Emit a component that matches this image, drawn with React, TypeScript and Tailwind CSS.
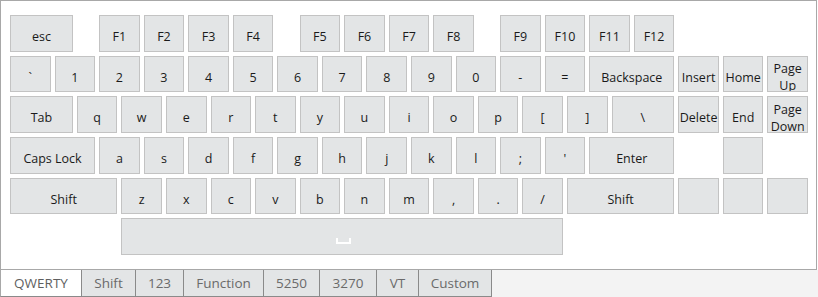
import React from "react";

type K = { l: string; c: string };

const rows: K[][] = [
  [
    { l: "esc", c: "col-span-3" },
    { l: "F1", c: "col-start-[5] col-span-2" },
    { l: "F2", c: "col-span-2" },
    { l: "F3", c: "col-span-2" },
    { l: "F4", c: "col-span-2" },
    { l: "F5", c: "col-start-[14] col-span-2" },
    { l: "F6", c: "col-span-2" },
    { l: "F7", c: "col-span-2" },
    { l: "F8", c: "col-span-2" },
    { l: "F9", c: "col-start-[23] col-span-2" },
    { l: "F10", c: "col-span-2" },
    { l: "F11", c: "col-span-2" },
    { l: "F12", c: "col-span-2" },
  ],
  [
    ...["`", "1", "2", "3", "4", "5", "6", "7", "8", "9", "0", "-", "="].map((l) => ({ l, c: "col-span-2" })),
    { l: "Backspace", c: "col-span-4" },
    { l: "Insert", c: "col-span-2" },
    { l: "Home", c: "col-span-2" },
    { l: "Page\nUp", c: "col-span-2" },
  ],
  [
    { l: "Tab", c: "col-span-3" },
    ...["q", "w", "e", "r", "t", "y", "u", "i", "o", "p", "[", "]"].map((l) => ({ l, c: "col-span-2" })),
    { l: "\\", c: "col-span-3" },
    { l: "Delete", c: "col-span-2" },
    { l: "End", c: "col-span-2" },
    { l: "Page\nDown", c: "col-span-2" },
  ],
  [
    { l: "Caps Lock", c: "col-span-4" },
    ...["a", "s", "d", "f", "g", "h", "j", "k", "l", ";", "'"].map((l) => ({ l, c: "col-span-2" })),
    { l: "Enter", c: "col-span-4" },
    { l: "", c: "col-start-[33] col-span-2" },
  ],
  [
    { l: "Shift", c: "col-span-5" },
    ...["z", "x", "c", "v", "b", "n", "m", ",", ".", "/"].map((l) => ({ l, c: "col-span-2" })),
    { l: "Shift", c: "col-span-5" },
    { l: "", c: "col-span-2" },
    { l: "", c: "col-span-2" },
    { l: "", c: "col-span-2" },
  ],
];

const tabs = [
  { l: "QWERTY", w: "w-[82px]", active: true },
  { l: "Shift", w: "w-[54px]" },
  { l: "123", w: "w-[48px]" },
  { l: "Function", w: "w-[80px]" },
  { l: "5250", w: "w-[56px]" },
  { l: "3270", w: "w-[57px]" },
  { l: "VT", w: "w-[42px]" },
  { l: "Custom", w: "w-[73px]" },
];

function Key({ k }: { k: K }) {
  return (
    <div
      className={`${k.c} flex min-h-0 items-center justify-center overflow-hidden border border-[#c3c3c3] bg-[#e3e5e6] pt-[8px] text-center text-[12.5px] leading-[16.5px] text-[#1a1a1a] whitespace-pre-line`}
    >
      {k.l}
    </div>
  );
}

export default function App() {
  return (
    <div className="w-[818px] h-[297px] bg-white" style={{ fontFamily: '"Open Sans", "Noto Sans", sans-serif' }}>
      <div className="w-[817px] h-[270px] border border-[#a8a8a8] bg-white pl-[9px] pt-[14px]">
        <div className="flex w-[798px] flex-col gap-[4px]">
          {rows.map((r, i) => (
            <div key={i} className="grid h-[36.67px] grid-cols-[repeat(36,minmax(0,1fr))] grid-rows-[36.67px] gap-x-[4px]">
              {r.map((k, j) => (
                <Key key={j} k={k} />
              ))}
            </div>
          ))}
          <div className="grid h-[36.67px] grid-cols-[repeat(36,minmax(0,1fr))] grid-rows-[36.67px] gap-x-[4px]">
            <div className="col-start-[6] col-span-20 flex items-center justify-center border border-[#c3c3c3] bg-[#e3e5e6] pt-[9px] pl-[2px]">
              <div className="h-[6px] w-[15px] border-x-2 border-b-2 border-white" />
            </div>
          </div>
        </div>
      </div>
      <div className="flex h-[27px] bg-[#f3f3f3]">
        {tabs.map((t, i) => (
          <div
            key={i}
            className={`${t.w} flex items-center justify-center border-b border-r border-[#8a8a8a] text-[13.5px] ${
              t.active ? "bg-white text-[#5f5f5f] border-l-[#a8a8a8] border-l" : "bg-[#e3e5e6] text-[#6a6a6a]"
            }`}
          >
            {t.l}
          </div>
        ))}
      </div>
    </div>
  );
}
